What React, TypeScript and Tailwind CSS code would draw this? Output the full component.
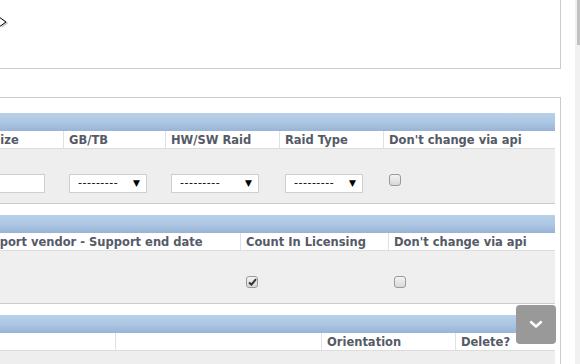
import React from "react";

const font = { fontFamily: '"DejaVu Sans", Verdana, sans-serif' };

const Select = ({ w }: { w: string }) => (
  <div className={`flex h-[19px] ${w} items-center justify-between border border-[#cfcfcf] bg-white pl-[8px] pr-[6px] text-[11px] text-black`}>
    <span className="tracking-[0.5px]">---------</span>
    <span className="text-[9px]">▼</span>
  </div>
);

const Check = ({ on }: { on?: boolean }) => (
  <div className="flex h-[12px] w-[12px] items-center justify-center rounded-[3px] border border-[#9a9a9a] bg-gradient-to-b from-[#f4f4f4] to-[#d8d8d8]">
    {on && (
      <svg width="9" height="8" viewBox="0 0 9 8">
        <path d="M1 4.5 L3.4 6.6 L8 1.2" fill="none" stroke="#333" strokeWidth="2" />
      </svg>
    )}
  </div>
);

const BlueBar = () => (
  <div className="h-[18px] bg-gradient-to-b from-[#b9d1e9] via-[#adc7e3] to-[#98b3d6]" />
);

const Th = ({ w, children, last }: { w: string; children?: React.ReactNode; last?: boolean }) => (
  <div className={`${w} flex h-full shrink-0 items-center whitespace-nowrap pl-[5px] pt-[3px] ${last ? "" : "border-r border-[#dbe2e8]"}`}>
    {children}
  </div>
);

export default function App() {
  return (
    <div className="flex h-[364px] w-[580px] overflow-hidden bg-white" style={font}>
      <div className="relative w-[575px] shrink-0 overflow-hidden">
        {/* top panel */}
        <div className="h-[69px] w-[561px] border-b border-r border-[#cccccc] bg-white" />
        <svg className="absolute left-0 top-[16px]" width="10" height="12" viewBox="0 0 10 12">
          <path d="M0 1 L7 6 L0 11 Z" fill="#999" opacity="0.5" transform="translate(1.5 1)" />
          <path d="M-1 1 L6 6 L-1 11 Z" fill="#fff" stroke="#000" strokeWidth="1" />
        </svg>

        <div className="mt-[28px] w-[561px] border-r border-t border-[#cccccc] pt-[15px] pr-[5px]">
          {/* table 1 */}
          <div className="border-b border-[#cccccc]">
            <BlueBar />
            <div className="ml-[-13px] flex h-[18px] border-b border-[#dcdcdc] bg-white text-[11.5px] font-bold text-[#555a66]">
              <Th w="w-[77px]">Size</Th>
              <Th w="w-[102px]">GB/TB</Th>
              <Th w="w-[114px]">HW/SW Raid</Th>
              <Th w="w-[104px]">Raid Type</Th>
              <Th w="w-[171px]" last>Don't change via api</Th>
            </div>
            <div className="ml-[-13px] flex h-[54px] bg-[#eeeeee] pt-[25px]">
              <div className="w-[77px] shrink-0">
                <div className="ml-[5px] h-[19px] w-[53px] border border-[#cfcfcf] bg-white" />
              </div>
              <div className="w-[102px] shrink-0 pl-[5px]">
                <Select w="w-[78px]" />
              </div>
              <div className="w-[114px] shrink-0 pl-[5px]">
                <Select w="w-[88px]" />
              </div>
              <div className="w-[104px] shrink-0 pl-[5px]">
                <Select w="w-[78px]" />
              </div>
              <div className="w-[171px] shrink-0 pl-[5px]">
                <Check />
              </div>
            </div>
          </div>

          {/* table 2 */}
          <div className="mt-[11px] border-b border-[#cccccc]">
            <BlueBar />
            <div className="ml-[-30px] flex h-[18px] border-b border-[#dcdcdc] bg-white text-[11.5px] font-bold text-[#555a66]">
              <Th w="w-[271px]">Support vendor - Support end date</Th>
              <Th w="w-[148px]">Count In Licensing</Th>
              <Th w="w-[166px]" last>Don't change via api</Th>
            </div>
            <div className="ml-[-30px] flex h-[52px] bg-[#efefef] pt-[25px]">
              <div className="w-[271px] shrink-0" />
              <div className="w-[148px] shrink-0 pl-[5px]">
                <Check on />
              </div>
              <div className="w-[166px] shrink-0 pl-[5px]">
                <Check />
              </div>
            </div>
          </div>

          {/* table 3 */}
          <div className="mt-[11px]">
            <BlueBar />
            <div className="flex h-[18px] border-b border-[#dcdcdc] bg-white text-[11.5px] font-bold text-[#555a66]">
              <Th w="w-[116px]" />
              <Th w="w-[206px]" />
              <Th w="w-[134px]">Orientation</Th>
              <Th w="w-[99px]" last>Delete?</Th>
            </div>
            <div className="h-[40px] bg-[#eeeeee]" />
          </div>
        </div>

        {/* scroll-down button */}
        <div className="absolute left-[516px] top-[305px] flex h-[39px] w-[40px] items-center justify-center rounded-[4px] bg-[#999999]">
          <svg width="14" height="9" viewBox="0 0 14 9">
            <path d="M2 2 L7 6.5 L12 2" fill="none" stroke="#fff" strokeWidth="2.5" strokeLinecap="round" strokeLinejoin="round" />
          </svg>
        </div>
      </div>

      {/* scrollbar */}
      <div className="flex w-[5px] shrink-0 flex-col bg-[#f1f1f1]">
        <div className="ml-[2px] h-[45px] w-[3px] bg-[#c1c1c1]" />
      </div>
    </div>
  );
}
